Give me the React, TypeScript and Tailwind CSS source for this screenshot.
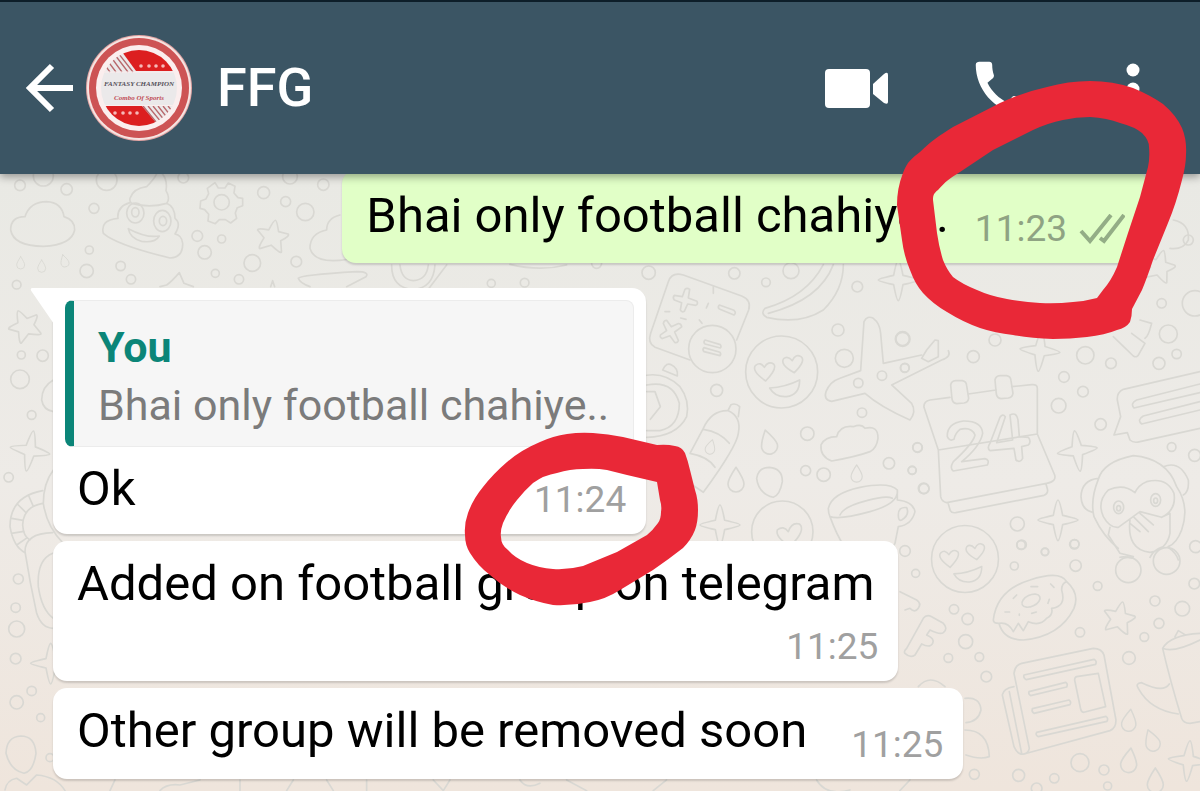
import React from 'react';
import { MdCall } from 'react-icons/md';

const messages = [
  { id: 2, text: 'Added on football group on telegram', time: '11:25' },
  { id: 3, text: 'Other group will be removed soon', time: '11:25' },
];

const BackIcon = () => (
  <svg viewBox="0 0 50 50" className="w-[50px] h-[50px]" fill="none" stroke="white" strokeWidth="6">
    <path d="M49 25H5M28 3 6 25l22 22" />
  </svg>
);

const VideoIcon = () => (
  <svg viewBox="0 0 64 40" className="w-16 h-10" fill="white">
    <rect x="0" y="1" width="45" height="39" rx="4" />
    <path d="M48 16 59 6q4-3 4 1v27q0 3-4 1L48 26z" />
  </svg>
);

const MenuIcon = () => (
  <svg viewBox="0 0 14 52" className="w-[14px] h-[52px]" fill="white">
    <circle cx="7" cy="8" r="6.500" />
    <circle cx="7" cy="27" r="6.500" />
    <circle cx="7" cy="45" r="6.500" />
  </svg>
);

const TicksIcon = () => (
  <svg viewBox="0 0 46 30" className="w-[46px] h-[30px]" fill="none" stroke="#93ad86" strokeWidth="4">
    <path d="m2 17 9 10L32 1M21 24l4 3L45 1" />
  </svg>
);

const GroupLogo = () => (
  <svg viewBox="0 0 106 106" className="w-[106px] h-[106px]">
    <defs>
      <clipPath id="logo-disc">
        <circle cx="53" cy="53" r="38" />
      </clipPath>
    </defs>
    <circle cx="53" cy="53" r="53" fill="#e3a5a4" />
    <circle cx="53" cy="53" r="52" fill="#f6e4e2" />
    <circle cx="53" cy="53" r="50" fill="#cd5354" />
    <circle cx="53" cy="53" r="43" fill="#fbeeee" />
    <g clipPath="url(#logo-disc)">
      <rect width="106" height="106" fill="#ebe9ea" />
      <path d="M31 10h60v26H50z" fill="#dc1f20" />
      <path d="M14 71h42l22 26H14z" fill="#dc1f20" />
      <g stroke="#b9686c" strokeWidth="1.300">
        <path d="m12 29 6 8M15 25l9 12M18 21l12 16M22 18l14 19M26 16l16 21M29 14l18 23" />
        <path d="m57 71 18 22M62 71l18 22M67 71l16 20M72 71l14 18M77 71l11 14M82 71l9 11M87 71l6 7" />
      </g>
      <path d="M0 36.500h106v1H0zM0 70h106v1H0z" fill="#fbeeee" />
    </g>
    <g fill="#f6b9b8">
      <circle cx="55" cy="31" r="1.800" />
      <circle cx="63" cy="31" r="1.800" />
      <circle cx="70" cy="31" r="1.800" />
      <circle cx="77" cy="31" r="1.800" />
      <circle cx="29" cy="78" r="1.800" />
      <circle cx="37" cy="78" r="1.800" />
      <circle cx="44" cy="78" r="1.800" />
      <circle cx="51" cy="78" r="1.800" />
    </g>
    <text x="53" y="51" textAnchor="middle" fontSize="7" fontStyle="italic" fontWeight="700" fill="#55505a" fontFamily="Liberation Serif, serif">
      FANTASY CHAMPION
    </text>
    <text x="53" y="65" textAnchor="middle" fontSize="7" fontStyle="italic" fontWeight="700" fill="#bf4c55" fontFamily="Liberation Serif, serif">
      Combo Of Sports
    </text>
  </svg>
);

const Star = ({ x, y, r = 0 }: { x: number; y: number; r?: number }) => (
  <path
    transform={`translate(${x} ${y}) rotate(${r})`}
    d="M0-50Q4-50 15-18L44-16Q52-12 26 8L34 40Q34 48 0 26L-32 42Q-38 40-25 8L-48-12Q-50-18-15-18Q-5-50 0-50z"
  />
);

const Sparkle = ({ x, y, r = 0 }: { x: number; y: number; r?: number }) => (
  <path
    transform={`translate(${x} ${y}) rotate(${r})`}
    d="M0-60Q5-60 14-14Q60-4 60 0Q60 4 14 14Q5 62 0 62Q-5 62-14 14Q-60 4-60 0Q-60-4-14-14Q-5-60 0-60z"
  />
);

const Drop = ({ x, y, r = 0, s = 1 }: { x: number; y: number; r?: number; s?: number }) => (
  <path transform={`translate(${x} ${y}) rotate(${r}) scale(${s})`} d="M0-36Q24 0 24 14A24 24 0 0 1-24 14Q-24 0 0-36z" />
);

const HeartFace = ({ x, y, s = 1 }: { x: number; y: number; s?: number }) => (
  <g transform={`translate(${x} ${y}) scale(${s})`}>
    <circle r="108" />
    <path d="M-48 27Q-92-4-78-20Q-64-32-52-14Q-40-34-24-24Q-12-10-48 27z" />
    <path d="M38 2Q-6-22 6-40Q18-50 32-34Q42-56 58-46Q74-34 38 2z" />
    <path d="M-36 48Q10 46 54 24Q54 70 14 74Q-20 76-36 48z" />
  </g>
);

const Bubbles = ({ items }: { items: number[][] }) => (
  <>
    {items.map(([x, y, r]) => (
      <circle key={`${x}-${y}`} cx={x} cy={y} r={r} />
    ))}
  </>
);

const Wallpaper = () => (
  <svg
    viewBox="0 174 1200 617"
    preserveAspectRatio="xMinYMin slice"
    className="absolute inset-0 w-full h-full"
    fill="none"
    stroke="#d9d8d3"
    strokeWidth="5"
    strokeLinejoin="round"
    strokeLinecap="round"
  >
    {/* clouds, gear and stars at the top left */}
    <g transform="translate(0 170) scale(.3333)">
      <path d="M75 140Q90 95 140 95Q185 97 192 140Q225 150 224 180Q215 225 130 229Q40 228 32 180Q32 140 75 140z" />
      <path d="M390 85Q400 55 440 50Q470 20 474 0Q505 20 498 62Q512 85 500 100Q450 115 395 100Q388 95 390 85zM390 98Q350 110 354 145Q300 150 310 190Q350 225 510 264Q550 262 548 220Q545 195 525 192Q545 160 525 145Q525 110 500 100M385 176Q440 205 478 198Q465 220 425 214Q390 205 385 176z" />
      <ellipse cx="406" cy="129" rx="26" ry="30" />
      <ellipse cx="406" cy="127" rx="11" ry="14" />
      <ellipse cx="487" cy="153" rx="26" ry="32" />
      <ellipse cx="489" cy="153" rx="11" ry="14" />
      <path d="m645 38 10 16h20l10-15 20 10-3 20 12 14 14 2v22l-16 6-6 16 4 16-18 14-16-10h-18l-12 12-22-8 2-20-12-14-14-4 2-22 16-6 8-16-4-16z" />
      <circle cx="665" cy="97" r="23" />
      <Star x={818} y={200} r={10} />
      <Star x={75} y={468} r={-25} />
      <path d="M480 350 500 345Q515 335 538 308L552 340L580 350M812 350l6-18 6 18M1020 135Q980 145 980 180Q930 190 930 235Q940 272 1000 272Q1040 272 1060 262M895 325Q900 315 1070 305Q1110 305 1098 320L1040 350M895 325Q900 340 930 350" />
      <path d="M1175 285Q1175 355 1240 358Q1300 355 1305 285M1200 285Q1205 330 1240 332Q1280 330 1285 285M1340 285L1285 358M1530 283Q1620 305 1700 285" />
      <Drop x={62} y={278} s={0.5} />
      <Drop x={125} y={288} s={0.5} />
      <Drop x={193} y={272} r={-15} s={0.5} />
      <Bubbles
        items={[
          [60, 46, 16], [130, 18, 30], [200, 58, 17], [320, 30, 31], [550, 23, 16], [282, 115, 15], [268, 240, 12], [260, 303, 20],
          [362, 288, 14], [393, 328, 14], [50, 344, 13], [592, 198, 16], [665, 207, 12], [614, 247, 20], [757, 279, 25], [646, 310, 12],
          [717, 328, 14], [791, 68, 18], [857, 95, 15], [916, 126, 26], [970, 44, 17], [870, 20, 22], [889, 275, 16], [64, 555, 12],
          [128, 557, 17], [1474, 340, 12], [1574, 338, 13], [1790, 280, 15],
        ]}
      />
    </g>

    {/* strip left of the messages */}
    <g transform="translate(0 370) scale(.3333)">
      <Sparkle x={90} y={242} r={10} />
      <Sparkle x={152} y={880} />
      <path d="M160 300Q130 340 130 400Q140 470 190 520M128 362Q30 380 30 470Q40 530 75 548M128 400Q70 410 68 465Q70 500 90 510M85 375l14 32M55 405l24 24M35 445l34 6M34 490l38-6M50 525l32-22M75 545Q75 490 158 488M75 545Q90 640 110 730Q125 775 160 775M158 550Q110 570 115 650Q125 720 160 745M160 30Q125 50 125 90Q130 120 160 125" />
      <path d="M62 1098Q105 1098 108 1150Q100 1205 72 1210Q30 1200 18 1150Q20 1100 62 1098zM15 1260Q20 1230 50 1225L80 1245L110 1215Q170 1220 195 1262M345 1230L330 1262M480 1262Q500 1240 540 1245L600 1230M720 1230v32M860 1262l20-32M980 1230l20 32M1100 1262v-32M1300 1230l30 32 20-32M1560 1230q20 30 60 10M1700 1230l60 32M2000 1230l-40 32M2450 1230q30 50 100 30M2700 1262l30-32" />
      <Bubbles
        items={[
          [60, 28, 28], [95, 135, 13], [26, 322, 14], [55, 627, 15], [47, 713, 14], [50, 777, 24], [47, 866, 16], [95, 963, 14],
          [50, 997, 20], [122, 1043, 12], [150, 1163, 12],
        ]}
      />
    </g>

    {/* calculator, banana, plane, bottle and cup */}
    <g transform="translate(640 260) scale(.3333)">
      <path d="M150 300 45 262Q22 250 32 220L85 65Q95 35 130 45L305 108Q335 120 326 150L290 240" />
      <circle cx="217" cy="267" r="71" />
      <path
        id="plus-key"
        d="m127 110 8-22q6-6 14 0l-4 26 26 10q4 8-4 12l-24-4-10 22q-8 4-12-4l4-22-22-8q-6-8 0-14z"
      />
      <path transform="translate(94 216) rotate(45) translate(-138 -121)" d="m127 110 8-22q6-6 14 0l-4 26 26 10q4 8-4 12l-24-4-10 22q-8 4-12-4l4-22-22-8q-6-8 0-14z" />
      <path d="m238 135 44 16q8 8 0 14l-44-18q-6-6 0-12zM195 240l46 14q4 6 0 10l-46-12q-6-6 0-12zM192 263l48 14q4 6 0 10l-48-12q-6-6 0-12zM220 80v20M205 130l-6 14M75 155h14M122 174l16 4M178 180l8 10" />
      <path d="M550 14Q500 110 375 145Q360 160 380 172Q480 195 550 150Q610 90 610 14M580 14Q540 120 385 160" />
      <HeartFace x={425} y={336} />
      <path d="M662 332 672 185Q682 165 700 175Q720 190 722 220L730 310L845 285M860 270L885 240L895 242V290L865 305L845 295zM925 272Q935 290 905 300L755 375L815 430Q830 455 810 480Q720 440 675 400L575 424Q550 420 558 395Q570 365 600 355L662 332" />
      <path d="M0 350Q70 330 120 380Q150 420 140 470Q110 530 20 532M20 375Q100 360 118 430Q118 500 60 512H20M20 395l25 0 16 45-30 38M68 330Q80 305 95 315Q115 325 112 348z" />
      <path d="m265 450 8-16q14-6 26 6l-4 30M190 505Q215 450 265 452Q305 470 295 520Q290 560 190 697L150 670M190 508Q240 515 268 550M150 580Q205 590 225 622M150 580L190 505" />
      <Drop x={212} y={560} r={15} s={0.6} />
      <Drop x={385} y={545} r={-15} />
      <Drop x={288} y={658} />
      <Drop x={650} y={640} s={0.7} />
      <path d="M388 622Q428 625 427 665Q420 705 400 712Q355 700 350 655Q355 622 388 622z" />
      <path d="M590 530Q600 495 640 500Q665 490 675 505Q715 495 714 535Q710 565 690 575Q650 590 575 603Q540 590 543 555Q555 530 590 530z" />
      <path d="M565 745Q575 700 660 682Q750 665 772 690Q778 730 690 755Q600 780 570 770Q565 760 565 745zM600 765Q610 740 680 722Q740 705 757 715M772 690V720Q820 725 825 755Q815 795 775 800L765 850Q740 900 660 905Q610 880 570 770M775 765Q775 740 800 743Q810 765 785 780Q775 785 775 765z" />
      <Sparkle x={240} y={795} />
      <circle cx="427" cy="815" r="92" />
      <path d="M450 860Q405 830 412 810Q430 795 445 815Q455 785 478 792Q500 810 450 860z" />
      <Sparkle x={775} y={60} />
      <Bubbles
        items={[
          [26, 38, 20], [283, 40, 17], [378, 67, 13], [453, 32, 24], [652, 80, 16], [594, 210, 18], [788, 237, 20], [613, 295, 27],
          [795, 323, 13], [726, 347, 14], [655, 369, 14], [230, 391, 18], [666, 458, 14], [502, 521, 20], [833, 563, 14], [747, 610, 17],
          [817, 631, 12], [497, 632, 15], [551, 644, 20], [852, 686, 15],
        ]}
      />
    </g>

    {/* calendar, speech note and monkey */}
    <g transform="translate(900 320) scale(.3333)">
      <path d="M150 232 90 240Q70 245 72 262L115 390L122 530Q125 545 140 548L440 490Q470 485 464 465L412 342V205Q412 192 395 194L335 200M205 222 288 210M115 390 412 342M145 552l6 20q4 8 16 6l265-52q14-6 10-20l-4-14" />
      <path d="M152 195q2-12 15-13h20q12 2 13 15l6 38q-2 12-14 14l-22 2q-12-2-14-14zM285 180q2-12 15-13h20q12 2 13 15l6 38q-2 12-14 14l-22 2q-12-2-14-14z" />
      <path d="M142 350Q140 310 190 303Q245 302 248 340Q240 380 185 425L255 416Q270 420 262 435L160 453Q148 445 160 425Q220 370 225 345Q215 320 180 328Q165 340 162 358Q148 365 142 350zM330 285Q350 275 354 300L358 350L385 352Q395 365 385 375L365 380L368 415Q360 430 348 420L342 385L270 392Q260 385 270 370L300 292Q308 280 316 290L290 368L338 360z" />
      <path d="M900 155 670 208Q650 218 652 240L662 290L642 345L682 338L690 360Q700 370 720 365L900 325M900 192 710 240Q690 250 702 264L900 218M900 245 730 288Q710 300 725 312L900 270" />
      <path d="M640 50 700 108Q712 115 718 100L735 70L695 40M735 55Q745 50 755 10L720 0" />
      <path d="M595 478Q610 425 700 407Q800 415 830 500Q870 560 845 630Q830 670 805 680M595 478Q570 540 582 590Q610 650 655 685M595 475Q545 480 543 530Q545 570 578 577M790 440Q840 420 865 480Q868 515 850 525" />
      <path d="M705 518Q670 490 625 510Q590 545 610 590Q630 625 655 622L720 575L785 592Q830 570 822 520Q800 470 740 485Q715 495 705 518zM690 600Q680 690 750 697Q800 690 810 640V580L785 592M630 622L625 645L660 700L700 710M700 590l45 45M720 580l40 35M690 610l30 25M805 682Q830 700 835 720M660 712Q670 708 700 715M750 712Q760 690 790 680" />
      <ellipse cx="656" cy="562" rx="15" ry="19" />
      <ellipse cx="767" cy="540" rx="15" ry="19" />
      <ellipse cx="656" cy="565" rx="6" ry="8" />
      <ellipse cx="767" cy="542" rx="6" ry="8" />
      <Sparkle x={420} y={92} r={5} />
      <Sparkle x={532} y={392} r={-8} />
      <Sparkle x={474} y={600} />
      <Star x={778} y={-160} r={15} />
      <path d="M820 -300Q870 -290 865 -240Q850 -210 810 -215" />
      <Bubbles
        items={[
          [220, 110, 18], [556, 106, 26], [633, 130, 16], [805, 42, 27], [777, 130, 18], [830, 102, 14], [492, 171, 16], [549, 215, 16],
          [476, 257, 22], [602, 313, 17], [52, 382, 14], [36, 451, 12], [71, 505, 16], [815, 381, 13], [884, 406, 18], [352, 612, 21],
          [363, 675, 13], [435, 695, 11], [524, 672, 13], [887, 680, 18], [865, -240, 15], [785, -50, 14], [885, -50, 38], [285, 60, 18],
          [8, 57, 22], [14, 144, 13],
        ]}
      />
    </g>

    {/* donut, newspaper and mug at the bottom right */}
    <g transform="translate(880 540) scale(.3333)">
      <HeartFace x={255} y={57} s={0.93} />
      <path d="M340 240Q350 150 450 120Q540 90 560 125Q600 160 582 205Q540 290 430 300Q370 300 357 250Q340 250 340 240zM357 250Q385 245 400 275L415 250L430 272L445 245Q480 260 500 235Q520 225 515 205Q560 200 545 150Q545 130 560 125" />
      <ellipse cx="453" cy="182" rx="29" ry="17" transform="rotate(-25 453 182)" />
      <path d="m400 175 10-10M453 140h20M512 132l10 10M508 178l-4 12M375 216h14M418 222v4M455 220l14-4" />
      <Star x={718} y={235} r={12} />
      <path d="M60 155 110 180Q125 190 115 205Q105 220 90 205L75 210M80 325 130 235Q140 222 155 230L190 250Q205 265 190 278Q180 285 150 270L140 285Q165 295 158 310Q150 325 125 312L105 345Q90 355 75 340Q70 335 80 325zM115 440Q150 400 195 440M255 475Q300 470 303 510Q295 545 258 548M255 570Q325 570 328 650Q300 660 258 645" />
      <path d="M425 370 640 325Q665 325 672 345L708 540Q708 565 690 572L440 640Q415 650 402 620L367 465Q370 445 402 440M402 400Q405 375 425 370M402 400 448 625Q445 640 430 642M388 455 425 640" />
      <path d="m432 405 210-47q10 5 5 15l-208 46q-10-5-7-14zM447 455l110-28q8 5 3 14l-108 26q-8-5-5-12zM457 506l110-26q8 5 3 14l-108 26q-8-5-5-14zM470 577l208-48q8 6 3 15l-206 46q-10-5-5-13zM590 410l65-10 22 100-65 17q-8 0-10-10l-18-87q0-8 6-10z" />
      <path d="M960 280Q870 285 848 325Q880 340 960 300M885 290l10-18 20 12M848 325Q870 420 905 535Q910 550 930 550L960 545M868 432Q850 460 785 428Q765 430 775 445Q810 510 895 522" />
      <Drop x={748} y={540} r={8} s={0.9} />
      <Drop x={815} y={600} r={-20} s={0.9} />
      <Drop x={748} y={660} r={8} />
      <Drop x={826} y={720} />
      <Sparkle x={925} y={662} r={5} />
      <circle cx="745" cy="90" r="38" />
      <circle cx="860" cy="63" r="40" />
      <Bubbles
        items={[
          [75, 33, 16], [107, 100, 12], [425, 14, 14], [495, 36, 11], [403, 78, 12], [587, 77, 17], [583, 13, 14], [653, 138, 13],
          [943, 131, 16], [222, 208, 14], [263, 237, 17], [257, 305, 21], [205, 354, 13], [298, 351, 13], [319, 410, 16], [600, 277, 14],
          [825, 183, 15], [907, 206, 22], [837, 250, 15], [793, 291, 13], [747, 354, 19], [600, 668, 27], [672, 690, 15], [416, 706, 18],
          [523, 715, 14], [283, 703, 15], [470, 745, 16], [683, 738, 12],
        ]}
      />
    </g>
  </svg>
);

// Hand-drawn marker rings around the two timestamps
const MarkerRings = () => (
  <svg viewBox="0 0 1200 791" className="absolute z-20 left-0 top-0 w-full pointer-events-none" fill="#e92837" fillRule="evenodd">
    <path
      d="M903 173C907 162 912 158 920 152C930 142 940 135 953 127L1000 103Q1024 92 1047 87Q1068 81 1090 81Q1113 81 1133 88Q1150 95 1163 104Q1176 115 1182 128Q1187 140 1186 155Q1186 165 1182 180Q1176 204 1168 223L1153 260Q1147 278 1142 290L1132 309Q1132 316 1130 322Q1126 328 1117 330Q1105 335 1087 337Q1070 339 1053 339Q1030 338 1013 335Q995 333 980 328Q963 322 947 312Q933 304 923 293Q915 284 910 270Q904 256 902 240L897 205Q897 188 903 173z
      M933 200C933 195 934 193 938 190C945 182 950 178 960 172L993 150L1033 130Q1048 123 1063 120Q1076 117 1090 117Q1107 118 1120 123Q1135 127 1142 133Q1149 140 1149 147Q1150 158 1148 167L1140 197L1128 233L1117 267Q1111 281 1103 290L1097 298Q1086 301 1073 302Q1056 304 1040 303Q1023 302 1007 299Q990 296 977 290Q962 284 953 277Q947 270 943 260Q939 247 937 233z"
    />
    <path
      d="M465 535Q464 524 468 513Q473 499 483 487Q493 474 507 462Q521 450 540 442Q553 436 567 434Q580 432 593 433Q608 434 623 437L657 445Q667 444 675 446Q682 447 685 453Q688 461 690 470L695 490Q698 499 698 510Q698 522 695 530Q691 540 683 548Q669 559 653 570L620 590Q606 599 590 602Q572 606 553 605Q536 602 520 595Q503 587 490 575Q478 566 470 553Q465 545 465 535z
      M501 537Q500 531 503 523Q508 511 517 500Q524 491 533 483Q544 475 557 473Q570 469 583 469Q596 468 607 470L627 475L657 482L660 500Q662 506 661 512Q661 519 658 523Q653 530 647 535L617 552L583 566Q568 570 553 569Q539 568 527 563Q515 558 508 550Q501 545 501 537z"
    />
  </svg>
);

const Time = ({ children }: { children: React.ReactNode }) => (
  <time className="text-[37px] leading-[44px] text-[#a0a0a0]">{children}</time>
);

const App: React.FC = () => {
  return (
    <div className="relative min-h-screen flex flex-col overflow-hidden font-['Roboto',sans-serif] text-black">
      <header className="relative z-10 flex items-center h-[174px] pl-6 pr-[60px] bg-[#3b5564] border-t-2 border-[#0d1e29] shadow-[0_3px_8px_rgba(0,0,0,0.35)]">
        <button aria-label="Back">
          <BackIcon />
        </button>
        <div className="ml-3">
          <GroupLogo />
        </div>
        <h1 className="ml-[25px] flex-1 text-[54px] leading-[64px] font-medium text-white">FFG</h1>
        <div className="flex items-center">
          <button aria-label="Video call">
            <VideoIcon />
          </button>
          <button aria-label="Voice call" className="ml-[78px]">
            <MdCall className="w-[70px] h-[70px] text-white" />
          </button>
          <button aria-label="More options" className="ml-[89px]">
            <MenuIcon />
          </button>
        </div>
      </header>

      <main className="relative flex-1 flex flex-col items-start px-[53px] pb-[11px] bg-linear-to-b from-[#e9e9e4] via-[#eeebe7] to-[#efe5dc]">
        <Wallpaper />

        <div className="relative self-end flex items-end h-[93px] -mt-1 pl-6 pr-[22px] pb-3 rounded-[14px] bg-[#e1ffc7] shadow-[0_2px_2px_rgba(0,0,0,0.15)]">
          <p className="pb-[7px] text-[49px] leading-[56px]">Bhai only football chahiye..</p>
          <div className="ml-[26px] flex items-center gap-3">
            <time className="text-[37px] leading-[44px] text-[#8fa383]">11:23</time>
            <TicksIcon />
          </div>
        </div>

        <div className="relative mt-[25px] p-3 rounded-[14px] rounded-tl-none bg-white shadow-[0_2px_2px_rgba(0,0,0,0.15)]">
          <svg viewBox="0 0 24 36" className="absolute -left-[23px] top-0 w-6 h-9" fill="white">
            <path d="M24 0H3Q-1 0 2 4L24 36z" />
          </svg>
          <blockquote className="pl-6 pr-6 pt-[17px] pb-3 border border-l-[9px] border-[#ececec] border-l-[#0b8578] rounded-lg bg-[#f6f6f6]">
            <h2 className="text-[43px] leading-[58px] font-bold text-[#0b8578]">You</h2>
            <p className="text-[43px] leading-[58px] text-[#7b7b7b]">Bhai only football chahiye..</p>
          </blockquote>
          <div className="mt-[14px] pl-3 pr-2 flex items-end justify-between">
            <p className="pb-[5px] text-[49px] leading-[56px]">Ok</p>
            <Time>11:24</Time>
          </div>
        </div>

        {messages.map((message, index) => (
          <div
            key={message.id}
            className={`relative mt-[7px] pl-6 pr-5 pt-[15px] pb-3 flex rounded-[14px] bg-white shadow-[0_2px_2px_rgba(0,0,0,0.15)] ${
              index === 0 ? 'flex-col items-end gap-[13px]' : 'items-end gap-11'
            }`}
          >
            <p className={`text-[49px] leading-[56px] ${index === 0 ? 'pr-1' : 'pb-2'}`}>{message.text}</p>
            <Time>{message.time}</Time>
          </div>
        ))}
      </main>

      <MarkerRings />
    </div>
  );
};

export default App;
